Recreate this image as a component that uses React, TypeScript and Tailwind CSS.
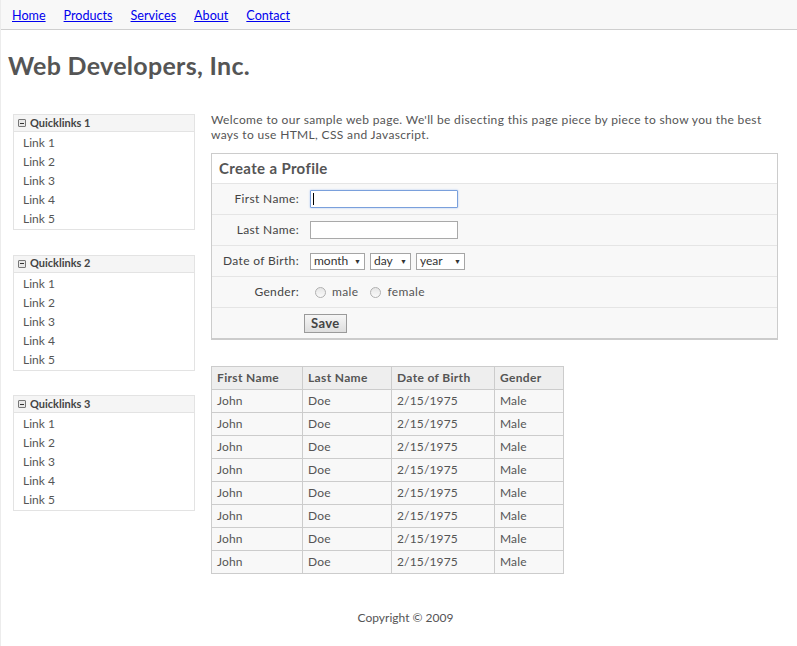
const NAV = ["Home", "Products", "Services", "About", "Contact"];
const LINKS = ["Link 1", "Link 2", "Link 3", "Link 4", "Link 5"];
const ROWS = Array.from({ length: 8 }, () => ["John", "Doe", "2/15/1975", "Male"]);

function Quicklinks({ title, last }: { title: string; last?: boolean }) {
  return (
    <div className={`border border-[#e3e3e3] ${last ? "" : "mb-[24.5px]"}`}>
      <div className="h-[17px] bg-[#f5f5f5] border-b border-[#e3e3e3] flex items-center pl-[4px] gap-[4px]">
        <span className="w-[8px] h-[8px] border border-[#777] rounded-[1px] bg-[#e8e8e8] flex items-center justify-center">
          <span className="w-[4px] h-px bg-[#333]" />
        </span>
        <span className="text-[11px] font-bold text-[#444] tracking-normal">{title}</span>
      </div>
      <ul className="py-px">
        {LINKS.map((l) => (
          <li key={l} className="pl-[9px] leading-[19px] text-[12px] text-[#555] tracking-normal">
            {l}
          </li>
        ))}
      </ul>
    </div>
  );
}

function FakeSelect({ label, w }: { label: string; w: string }) {
  return (
    <div className={`${w} h-[17px] border border-[#a5a5a5] bg-white flex items-center justify-between px-[3px] text-[12px] text-[#333] tracking-normal`}>
      <span>{label}</span>
      <span className="text-[7px] text-[#333]">▼</span>
    </div>
  );
}

function Radio({ label }: { label: string }) {
  return (
    <span className="flex items-center gap-[6px]">
      <span className="w-[11px] h-[11px] rounded-full border border-[#b0b0b0] bg-gradient-to-b from-[#e6e6e6] to-[#fafafa]" />
      <span>{label}</span>
    </span>
  );
}

function FormRow({ label, children }: { label: string; children: React.ReactNode }) {
  return (
    <div className="h-[31px] border-t border-[#e5e5e5] bg-[#f8f8f8] flex items-center">
      <div className="w-[87px] text-right text-[12px] text-[#444]">{label}</div>
      <div className="ml-[11px] flex items-center gap-[5px]">{children}</div>
    </div>
  );
}

export default function App() {
  return (
    <div
      className="min-h-screen bg-white border-l border-[#ececec] text-[#555] tracking-[0.35px]"
      style={{ fontFamily: "Lato, 'Open Sans', sans-serif" }}
    >
      {/* Top nav */}
      <nav className="h-[30px] bg-[#f8f8f8] border-b border-[#cfcfcf] flex items-center gap-[18px] px-[11px] pt-[3px] text-[12.6px] tracking-normal">
        {NAV.map((n) => (
          <a key={n} href="#" className="text-[#0000ee] underline">
            {n}
          </a>
        ))}
      </nav>

      <h1 className="mt-[21px] ml-[7px] text-[25px] leading-[29px] font-bold text-[#555] tracking-[0.3px]">
        Web Developers, Inc.
      </h1>

      <div className="flex mt-[32px]">
        {/* Sidebar */}
        <aside className="ml-[12px] w-[182px] mt-[2px] shrink-0">
          <Quicklinks title="Quicklinks 1" />
          <Quicklinks title="Quicklinks 2" />
          <Quicklinks title="Quicklinks 3" last />
        </aside>

        {/* Main */}
        <main className="ml-[16px] w-[567px]">
          <p className="text-[12px] leading-[15px] text-[#555] pr-[6px]">
            Welcome to our sample web page. We'll be disecting this page piece by piece to show you the best
            ways to use HTML, CSS and Javascript.
          </p>

          <div className="mt-[11px] border border-[#ccc] border-b-2">
            <div className="h-[29px] flex items-center px-[7px] text-[15px] font-bold text-[#555]">
              Create a Profile
            </div>
            <FormRow label="First Name:">
              <div className="relative w-[148px] h-[18px] border border-[#7aa0dc] bg-white rounded-[1px] shadow-[0_0_2px_#9fbff0]">
                <span className="absolute left-[2px] top-[2px] w-px h-[12px] bg-black" />
              </div>
            </FormRow>
            <FormRow label="Last Name:">
              <div className="w-[148px] h-[18px] border border-[#a9a9a9] bg-white" />
            </FormRow>
            <FormRow label="Date of Birth:">
              <FakeSelect label="month" w="w-[55px]" />
              <FakeSelect label="day" w="w-[41px]" />
              <FakeSelect label="year" w="w-[49px]" />
            </FormRow>
            <FormRow label="Gender:">
              <div className="ml-[5px] flex items-center gap-[12px] text-[12px] text-[#555]">
                <Radio label="male" />
                <Radio label="female" />
              </div>
            </FormRow>
            <div className="h-[31px] border-t border-[#e5e5e5] bg-[#f8f8f8] flex items-center pl-[92px]">
              <button className="h-[19px] px-[6px] border border-[#9a9a9a] bg-gradient-to-b from-[#f6f6f6] to-[#dedede] text-[13px] font-bold text-[#444] leading-none">
                Save
              </button>
            </div>
          </div>

          <table className="mt-[26px] border-collapse text-[12px] tracking-[0.15px]">
            <thead>
              <tr className="bg-[#eee] h-[23px]">
                {[
                  ["First Name", "w-[91px]"],
                  ["Last Name", "w-[89px]"],
                  ["Date of Birth", "w-[103px]"],
                  ["Gender", "w-[69px]"],
                ].map(([h, w]) => (
                  <th key={h} className={`${w} border border-[#ccc] text-left font-bold pl-[5px] text-[#555] tracking-[0.35px]`}>
                    {h}
                  </th>
                ))}
              </tr>
            </thead>
            <tbody>
              {ROWS.map((r, i) => (
                <tr key={i} className="bg-[#f8f8f8] h-[23px]">
                  {r.map((c, j) => (
                    <td key={j} className="border border-[#ccc] pl-[5px] text-[#555]">
                      {c}
                    </td>
                  ))}
                </tr>
              ))}
            </tbody>
          </table>
        </main>
      </div>

      <footer className="mt-[35px] pl-[13px] text-center text-[12px] text-[#555] pb-[20px] tracking-normal">
        Copyright © 2009
      </footer>
    </div>
  );
}
